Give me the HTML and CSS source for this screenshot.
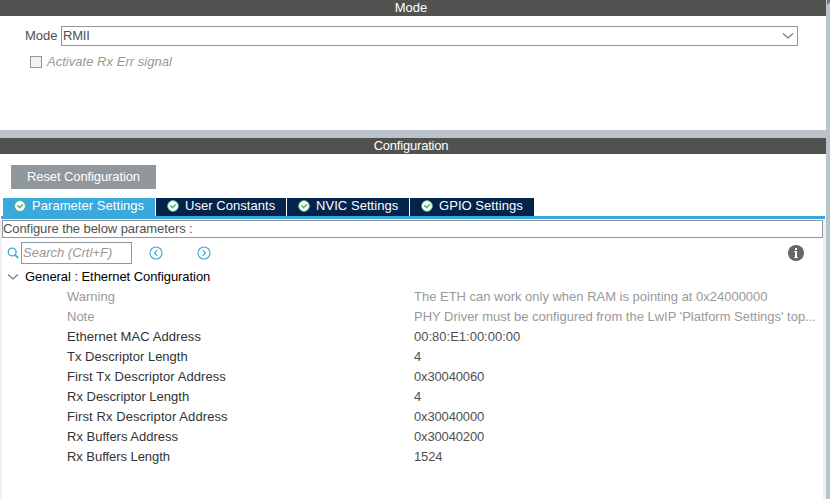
FILE: index.html
```html
<!DOCTYPE html>
<html lang="en">
<head>
<meta charset="utf-8">
<title>Ethernet Mode and Configuration</title>
<link rel="stylesheet" href="styles.css">
</head>
<body>
<svg class="defs" aria-hidden="true">
  <symbol id="check" viewBox="0 0 12 12"><circle cx="6" cy="6" r="5.4" fill="#fff" stroke="#55b47c" stroke-width=".9"/><path d="M3.2 5.2 5.6 7.6 9 4.2" fill="none" stroke="#55b47c" stroke-width="1.5"/></symbol>
</svg>
<main class="window">
  <section class="mode">
    <h2 class="bar"><span>Mode</span></h2>
    <div class="mode-row">
      <span>Mode</span>
      <div class="select">
        <span>RMII</span>
        <svg width="12" height="8" viewBox="0 0 12 8"><path d="M1 1.5 6 6 11 1.5" fill="none" stroke="#777" stroke-width="1.2"/></svg>
      </div>
    </div>
    <div class="check-row"><span class="checkbox"></span><em>Activate Rx Err signal</em></div>
  </section>
  <section class="config">
    <h2 class="bar"><span class="title">Configuration</span></h2>
    <button class="reset">Reset Configuration</button>
    <nav class="tabs">
      <div class="tab tab-params active"><svg><use href="#check"/></svg><span>Parameter Settings</span></div>
      <div class="tab tab-user"><svg><use href="#check"/></svg><span>User Constants</span></div>
      <div class="tab tab-nvic"><svg><use href="#check"/></svg><span>NVIC Settings</span></div>
      <div class="tab tab-gpio"><svg><use href="#check"/></svg><span>GPIO Settings</span></div>
    </nav>
    <div class="panel">
      <div class="hint">Configure the below parameters :</div>
      <div class="tools">
        <svg class="magnifier" width="12" height="12" viewBox="0 0 12 12"><circle cx="5.2" cy="5" r="3.9" fill="none" stroke="#39a9dc" stroke-width="1.4"/><path d="M8 8 11.3 11" stroke="#39a9dc" stroke-width="1.7"/></svg>
        <div class="search">Search (Crtl+F)</div>
        <svg class="prev" width="14" height="14" viewBox="0 0 14 14" fill="none" stroke="#39a9dc" stroke-width="1.1"><circle cx="7" cy="7" r="6"/><path d="M8.3 4.2 5.5 7 8.3 9.8"/></svg>
        <svg class="next" width="14" height="14" viewBox="0 0 14 14" fill="none" stroke="#39a9dc" stroke-width="1.1"><circle cx="7" cy="7" r="6"/><path d="M5.7 4.2 8.5 7 5.7 9.8"/></svg>
        <svg class="info" width="16" height="16" viewBox="0 0 16 16"><circle cx="8" cy="8" r="8" fill="#666"/><path d="M7 3h2v2H7zM6 6h3v6h1v1H6v-1h1V7H6z" fill="#fff"/></svg>
      </div>
      <div class="group">
        <svg width="12" height="8" viewBox="0 0 12 8"><path d="M1 1.5 6 6 11 1.5" fill="none" stroke="#777" stroke-width="1.2"/></svg>
        <span>General : Ethernet Configuration</span>
      </div>
      <dl class="params">
        <dt class="muted">Warning</dt><dd class="muted">The ETH can work only when RAM is pointing at 0x24000000</dd>
        <dt class="muted">Note</dt><dd class="muted">PHY Driver must be configured from the LwIP 'Platform Settings' top...</dd>
        <dt class="wide">Ethernet MAC Address</dt><dd>00:80:E1:00:00:00</dd>
        <dt>Tx Descriptor Length</dt><dd class="hex">4</dd>
        <dt class="wide">First Tx Descriptor Address</dt><dd class="hex">0x30040060</dd>
        <dt>Rx Descriptor Length</dt><dd class="hex">4</dd>
        <dt class="wide">First Rx Descriptor Address</dt><dd class="hex">0x30040000</dd>
        <dt>Rx Buffers Address</dt><dd class="hex">0x30040200</dd>
        <dt class="tight">Rx Buffers Length</dt><dd class="hex">1524</dd>
      </dl>
    </div>
  </section>
</main>
<svg class="corner" width="4" height="5" viewBox="0 0 4 5"><path d="M1 0h3v2L1 5z" fill="#6d7478"/></svg>
</body>
</html>
```
FILE: styles.css
```css
* { box-sizing: border-box; }
body {
  display: flex;
  align-items: flex-start;
  margin: 0;
  height: 499px;
  overflow: hidden;
  background: #b8c4ca;
  color: #505050;
  font: 13px/16px "Liberation Sans", Arial, sans-serif;
}
svg { flex: none; display: block; }
.defs { display: none; }
.window {
  flex: none;
  width: 826px;
  height: 499px;
  display: flex;
  flex-direction: column;
  gap: 8px;
}
.mode { height: 130px; background: #fff; }
.config { flex: 1; background: #fff; display: flex; flex-direction: column; }
.bar {
  flex: none;
  margin: 0;
  height: 16px;
  padding-right: 4px;
  background: #50524f;
  color: #fff;
  font-size: 13px;
  font-weight: 400;
  line-height: 15px;
  text-align: center;
}
.title { letter-spacing: -0.2px; }
.mode-row {
  display: flex;
  align-items: center;
  justify-content: space-between;
  margin: 10px 28px 0 25px;
  height: 20px;
}
.select {
  width: 737px;
  height: 20px;
  display: flex;
  align-items: center;
  justify-content: space-between;
  padding: 0 3px 0 1px;
  border: 1px solid #8f979e;
  letter-spacing: -0.2px;
}
.check-row {
  display: flex;
  align-items: center;
  gap: 5px;
  margin: 8px 0 0 30px;
  height: 16px;
  color: #999;
  letter-spacing: 0.03px;
}
.checkbox { width: 12px; height: 12px; border: 1px solid #8f979e; background: #f0f1f4; }
.reset {
  flex: none;
  width: 145px;
  height: 24px;
  margin: 11px 0 9px 11px;
  padding: 0;
  border: 0;
  background: #90989e;
  color: #fff;
  font: inherit;
  letter-spacing: -0.1px;
}
.tabs {
  flex: none;
  display: flex;
  gap: 1px;
  height: 21px;
  margin: 0 1px;
  padding-left: 2px;
  border-bottom: 3px solid #39a9dc;
}
.tab {
  display: flex;
  align-items: center;
  gap: 6px;
  height: 18px;
  padding: 0 0 2px 11px;
  background: #03234b;
  color: #fff;
  white-space: nowrap;
  letter-spacing: 0.05px;
}
.tab svg { width: 12px; height: 12px; }
.tab.active { background: #39a9dc; }
.tab-params { width: 152px; }
.tab-user { width: 130px; }
.tab-nvic { width: 122px; }
.tab-gpio { width: 124px; }
.panel {
  flex: 1;
  padding-top: 1px;
  border: solid #f0f0f0;
  border-width: 0 3px 0 2px;
}
.hint { height: 18px; border: 1px solid #8f979e; letter-spacing: -0.08px; }
.tools { display: flex; align-items: center; height: 22px; margin-top: 4px; padding: 0 19px 0 5px; }
.magnifier { margin-right: 2px; }
.search {
  width: 111px;
  height: 22px;
  padding-left: 1px;
  border: 1px solid #8f979e;
  color: #999;
  font-style: italic;
  line-height: 20px;
}
.prev { margin-left: 17px; }
.next { margin-left: 34px; }
.info { margin-left: auto; }
.group {
  display: flex;
  align-items: center;
  gap: 6px;
  height: 20px;
  margin-top: 3px;
  padding-left: 5px;
  color: #000;
  letter-spacing: -0.06px;
}
.params {
  display: grid;
  grid-template-columns: 347px 1fr;
  grid-auto-rows: 20px;
  margin: 0;
  padding-left: 65px;
  line-height: 20px;
  white-space: nowrap;
}
.params dt { color: #333; }
.params dd { margin: 0; }
.params .muted { color: #999; letter-spacing: -0.01px; }
.params .wide { letter-spacing: 0.09px; }
.params .tight { letter-spacing: -0.05px; }
.params .hex { letter-spacing: -0.15px; }
```
